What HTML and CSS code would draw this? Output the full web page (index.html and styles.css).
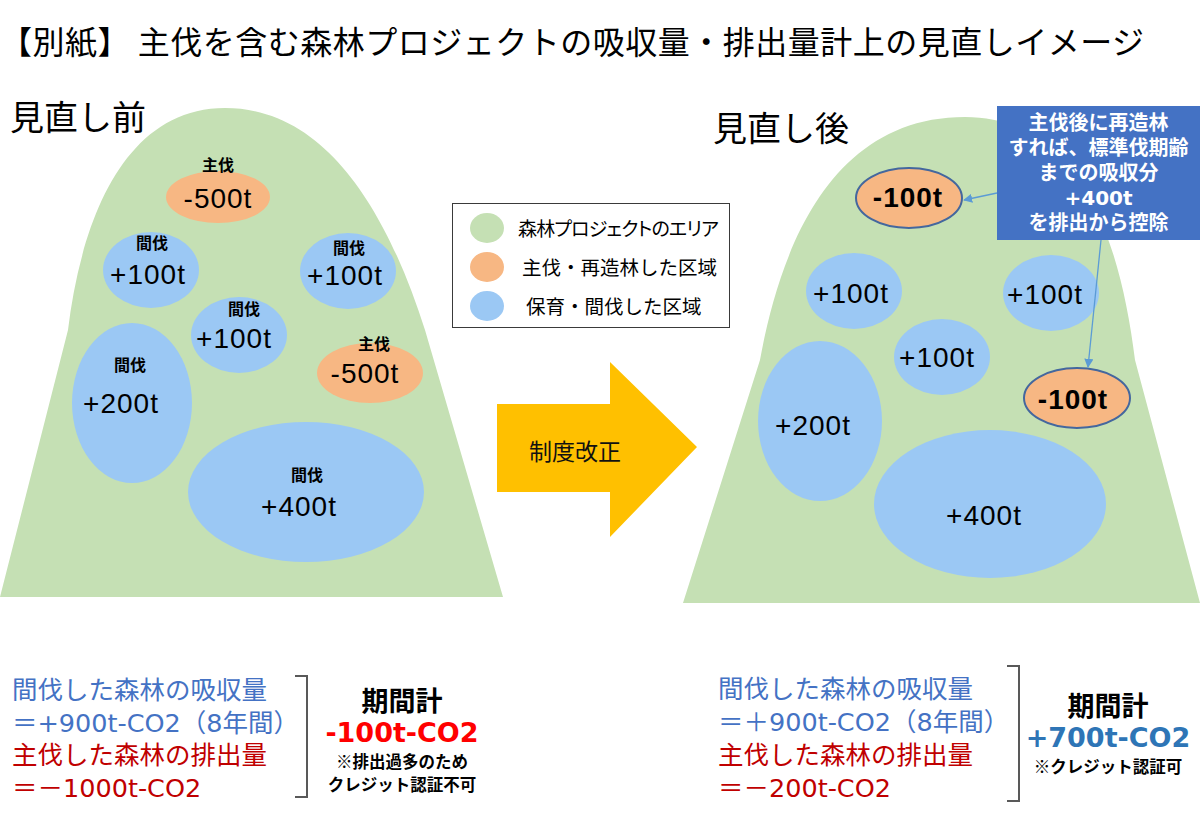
FILE: index.html
```html
<!DOCTYPE html>
<html lang="ja">
<head>
<meta charset="utf-8">
<title>主伐を含む森林プロジェクトの吸収量・排出量計上の見直しイメージ</title>
<link rel="stylesheet" href="styles.css">
</head>
<body>
<div class="slide">
  <h1 class="title">【別紙】 主伐を含む森林プロジェクトの吸収量・排出量計上の見直しイメージ</h1>

  <div class="stage">
    <svg class="art" width="1200" height="560" viewBox="0 80 1200 560" xmlns="http://www.w3.org/2000/svg">
      <defs>
        <marker id="head" viewBox="0 0 10 10" refX="9" refY="5" markerWidth="7" markerHeight="7" orient="auto-start-reverse">
          <path d="M0,0 L10,5 L0,10 Z" class="head-fill"/>
        </marker>
      </defs>

      <!-- before -->
      <path class="green" d="M0,597 L68,330 C80,230 120,108 225,108 C330,108 390,220 425,330 L503,597 Z"/>
      <ellipse class="orange" cx="218" cy="197" rx="52" ry="26"/>
      <ellipse class="blue" cx="151" cy="270" rx="48" ry="38"/>
      <ellipse class="blue" cx="348" cy="271" rx="48" ry="38"/>
      <ellipse class="blue" cx="239" cy="335" rx="48" ry="38"/>
      <ellipse class="orange" cx="370" cy="373" rx="53" ry="30"/>
      <ellipse class="blue" cx="132" cy="403" rx="60" ry="80"/>
      <ellipse class="blue" cx="306" cy="492" rx="118" ry="70"/>

      <text class="l" x="218" y="164">主伐</text>
      <text class="n" x="218" y="198">-500t</text>
      <text class="l" x="152" y="242">間伐</text>
      <text class="n" x="148" y="274">+100t</text>
      <text class="l" x="349" y="247">間伐</text>
      <text class="n" x="345" y="275">+100t</text>
      <text class="l" x="244" y="308">間伐</text>
      <text class="n" x="234" y="338">+100t</text>
      <text class="l" x="374" y="343">主伐</text>
      <text class="n" x="365" y="373">-500t</text>
      <text class="l" x="130" y="364">間伐</text>
      <text class="n" x="121" y="403">+200t</text>
      <text class="l" x="307" y="474">間伐</text>
      <text class="n" x="299" y="506">+400t</text>

      <!-- arrow -->
      <polygon class="yellow" points="497,404 610,404 610,362 697,447 610,537 610,492 497,492"/>
      <text class="arrow-text" x="575" y="450">制度改正</text>

      <!-- after -->
      <path class="green" d="M683,603 L760,360 C780,250 830,117 965,117 C1080,117 1120,240 1135,360 L1200,603 Z"/>
      <ellipse class="orange ring" cx="909" cy="198" rx="53" ry="30"/>
      <ellipse class="blue" cx="854" cy="291" rx="48" ry="38"/>
      <ellipse class="blue" cx="1051" cy="293" rx="48" ry="38"/>
      <ellipse class="blue" cx="942" cy="357" rx="48" ry="38"/>
      <ellipse class="orange ring" cx="1077" cy="398" rx="53" ry="30"/>
      <ellipse class="blue" cx="820" cy="421" rx="62" ry="80"/>
      <ellipse class="blue" cx="990" cy="504" rx="116" ry="74"/>

      <text class="n nb" x="908" y="197">-100t</text>
      <text class="n" x="851" y="293">+100t</text>
      <text class="n" x="1045" y="294">+100t</text>
      <text class="n" x="937" y="357">+100t</text>
      <text class="n nb" x="1073" y="399">-100t</text>
      <text class="n" x="813" y="425">+200t</text>
      <text class="n" x="984" y="515">+400t</text>

      <line class="connector" x1="997" y1="193" x2="964" y2="200" marker-end="url(#head)"/>
      <line class="connector" x1="1101" y1="240" x2="1088" y2="367" marker-end="url(#head)"/>
    </svg>

    <div class="section before">見直し前</div>
    <div class="section after">見直し後</div>

    <div class="legend">
      <div class="legend-row row1"><span class="dot dot-green"></span><span>森林プロジェクトのエリア</span></div>
      <div class="legend-row row2"><span class="dot dot-orange"></span><span>主伐・再造林した区域</span></div>
      <div class="legend-row row3"><span class="dot dot-blue"></span><span>保育・間伐した区域</span></div>
    </div>

    <div class="callout">
      <div>主伐後に再造林</div>
      <div>すれば、標準伐期齢</div>
      <div>までの吸収分</div>
      <div>+400t</div>
      <div>を排出から控除</div>
    </div>
  </div>

  <div class="summaries">
    <div class="summary summary-before">
      <div class="lines">
        <div class="c-blue">間伐した森林の吸収量</div>
        <div class="c-blue">＝+900t-CO2（8年間）</div>
        <div class="c-red">主伐した森林の排出量</div>
        <div class="c-red">＝－1000t-CO2</div>
      </div>
      <div class="bracket"></div>
      <div class="total">
        <div class="head">期間計</div>
        <div class="sum sum-red">-100t-CO2</div>
        <div class="note">※排出過多のため</div>
        <div class="note">クレジット認証不可</div>
      </div>
    </div>
    <div class="summary summary-after">
      <div class="lines">
        <div class="c-blue">間伐した森林の吸収量</div>
        <div class="c-blue">＝＋900t-CO2（8年間）</div>
        <div class="c-red">主伐した森林の排出量</div>
        <div class="c-red">＝－200t-CO2</div>
      </div>
      <div class="bracket"></div>
      <div class="total">
        <div class="head">期間計</div>
        <div class="sum sum-blue">+700t-CO2</div>
        <div class="note">※クレジット認証可</div>
      </div>
    </div>
  </div>
</div>
</body>
</html>
```

FILE: styles.css
```css
html, body {
  margin: 0;
  padding: 0;
  background: #ffffff;
}

body {
  font-family: "Noto Sans CJK JP", "Noto Sans", sans-serif;
  color: #000000;
}

.slide {
  width: 1200px;
  height: 823px;
  overflow: hidden;
}

.title {
  margin: 0;
  height: 80px;
  display: flex;
  align-items: center;
  padding-left: 0;
  font-size: 32px;
  font-weight: 400;
  white-space: nowrap;
  letter-spacing: 0.5px;
}

/* diagram canvas */
.stage {
  position: relative;
  height: 560px;
}

.art {
  display: block;
}

.green { fill: #C5E0B4; }
.blue { fill: #9BC8F4; }
.orange { fill: #F7B783; }
.ring { stroke: #44679E; stroke-width: 2; }
.yellow { fill: #FFC000; }
.connector { stroke: #5B9BD5; stroke-width: 1.3; }
.head-fill { fill: #5B9BD5; }

.n {
  font-family: "Liberation Sans", Arial, sans-serif;
  font-size: 28px;
  letter-spacing: 1px;
  fill: #000000;
  text-anchor: middle;
  dominant-baseline: central;
}

.nb { font-weight: 700; }

.l {
  font-family: "Noto Sans CJK JP", sans-serif;
  font-size: 16px;
  font-weight: 700;
  fill: #000000;
  text-anchor: middle;
  dominant-baseline: central;
}

.arrow-text {
  font-family: "Noto Sans CJK JP", sans-serif;
  font-size: 23px;
  fill: #111111;
  text-anchor: middle;
  dominant-baseline: central;
}

.section {
  position: absolute;
  font-size: 34px;
  line-height: 1;
  white-space: nowrap;
}

.before { left: 10px; top: 19px; }
.after { left: 713px; top: 30px; }

/* legend */
.legend {
  position: absolute;
  left: 452px;
  top: 123px;
  width: 278px;
  height: 125px;
  box-sizing: border-box;
  border: 1.5px solid #3a3a3a;
  background: #ffffff;
  padding: 4px 0 0 17px;
}

.legend-row {
  display: flex;
  align-items: center;
  height: 39px;
  font-size: 19.5px;
  white-space: nowrap;
}

.row1 { gap: 14px; font-size: 19px; font-feature-settings: "palt"; letter-spacing: -0.8px; }
.row2 { gap: 18px; }
.row3 { gap: 22px; }

.dot {
  flex: none;
  width: 34px;
  height: 30px;
  border-radius: 50%;
}

.dot-green { background: #C5E0B4; }
.dot-orange { background: #F7B783; }
.dot-blue { background: #9BC8F4; }

/* callout */
.callout {
  position: absolute;
  left: 997px;
  top: 26px;
  width: 203px;
  height: 134px;
  box-sizing: border-box;
  padding-top: 5px;
  background: #4472C4;
  color: #ffffff;
  font-family: "DejaVu Sans", "Noto Sans CJK JP", sans-serif;
  font-weight: 700;
  font-size: 20px;
  line-height: 25px;
  text-align: center;
  white-space: nowrap;
}

/* summaries */
.summaries {
  display: grid;
  grid-template-columns: 706px 494px;
  height: 183px;
}

.summary {
  display: flex;
  align-items: flex-start;
  padding-left: 12px;
}

.lines {
  font-family: "DejaVu Sans", "Noto Sans CJK JP", sans-serif;
  font-size: 25.5px;
  white-space: nowrap;
}

.summary-before .lines { width: 283px; padding-top: 34px; line-height: 32.5px; }
.summary-after .lines { width: 289px; padding-top: 33px; line-height: 33px; }

.c-blue { color: #4472C4; }
.c-red { color: #C00000; }

.bracket {
  flex: none;
  width: 11px;
  border: 2px solid #595959;
  border-left: 0;
}

.summary-before .bracket { margin-top: 35px; height: 119px; }
.summary-after .bracket { margin-top: 25px; height: 133px; }

.total {
  text-align: center;
  white-space: nowrap;
}

.summary-before .total { width: 188px; padding-top: 44px; }
.summary-after .total { width: 176px; padding-top: 49px; }

.head {
  font-size: 27px;
  font-weight: 700;
  line-height: 32px;
}

.sum {
  font-family: "DejaVu Sans", sans-serif;
  font-size: 27px;
  font-weight: 700;
  line-height: 34px;
}

.sum-red { color: #FF0000; }
.sum-blue { color: #2E75B6; }

.note {
  font-size: 16.5px;
  font-weight: 700;
  line-height: 23px;
}
```
